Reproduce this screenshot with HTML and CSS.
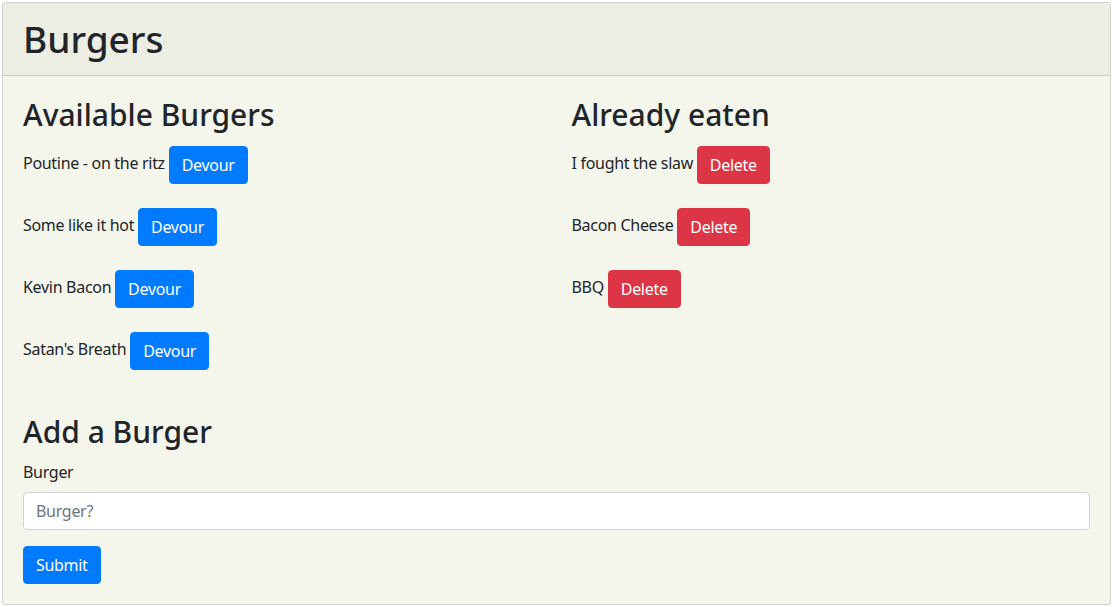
FILE: index.html
```html
<!DOCTYPE html>
<html lang="en">
<head>
<meta charset="utf-8">
<title>Burgers</title>
<link rel="stylesheet" href="styles.css">
</head>
<body>
<div class="card">
  <div class="card-header">
    <h1 class="title">Burgers</h1>
  </div>
  <div class="card-body">
    <div class="columns">
      <section class="col">
        <h2 class="heading">Available Burgers</h2>
        <p class="item">Poutine - on the ritz <button class="btn btn-blue">Devour</button></p>
        <p class="item">Some like it hot <button class="btn btn-blue">Devour</button></p>
        <p class="item">Kevin Bacon <button class="btn btn-blue">Devour</button></p>
        <p class="item">Satan's Breath <button class="btn btn-blue">Devour</button></p>
      </section>
      <section class="col">
        <h2 class="heading">Already eaten</h2>
        <p class="item">I fought the slaw <button class="btn btn-red">Delete</button></p>
        <p class="item">Bacon Cheese <button class="btn btn-red">Delete</button></p>
        <p class="item">BBQ <button class="btn btn-red">Delete</button></p>
      </section>
    </div>
    <form class="add-form">
      <h2 class="heading">Add a Burger</h2>
      <div class="form-group">
        <label class="label" for="burger">Burger</label>
        <input class="input" id="burger" type="text" placeholder="Burger?">
      </div>
      <button class="btn btn-blue" type="button">Submit</button>
    </form>
  </div>
</div>
</body>
</html>
```

FILE: styles.css
```css
* { box-sizing: border-box; }
html, body { margin: 0; }
body {
  padding: 2px 1px 2px 2px;
  font-family: "Noto Sans", "Open Sans", sans-serif;
  font-size: 16px;
  line-height: 24px;
  letter-spacing: -0.3px;
  color: #212529;
  background: #fff;
}
.card {
  border: 1px solid rgba(0,0,0,.15);
  border-radius: 4px;
  background: #f4f5eb;
  overflow: hidden;
}
.card-header {
  padding: 12px 20px;
  background: #ecede3;
  border-bottom: 1px solid rgba(0,0,0,.15);
}
.title {
  margin: 0;
  font-size: 37px;
  font-weight: 500;
  line-height: 48px;
  letter-spacing: 0;
}
.card-body { padding: 20px; }
.columns {
  display: grid;
  grid-template-columns: 1fr 1fr;
  column-gap: 30px;
}
.heading {
  margin: 0 0 8px;
  font-size: 30px;
  font-weight: 500;
  line-height: 38.4px;
  letter-spacing: 0;
}
.item { margin: 0 0 16px; }
.btn {
  display: inline-block;
  margin: 4px 0 4px 0;
  padding: 6px 12px;
  font-family: inherit;
  font-size: 16px;
  line-height: 24px;
  letter-spacing: -0.3px;
  color: #fff;
  border: 1px solid transparent;
  border-radius: 4px;
  cursor: pointer;
  vertical-align: -2px;
}
.btn-blue { background: #007bff; border-color: #007bff; }
.btn-red { background: #dc3545; border-color: #dc3545; }
.add-form { margin-top: 23px; }
.form-group { margin-bottom: 16px; }
.label { display: block; margin-bottom: 8px; }
.input {
  display: block;
  width: 100%;
  height: 38px;
  padding: 6px 12px;
  font-family: inherit;
  font-size: 16px;
  letter-spacing: -0.3px;
  color: #495057;
  background: #fff;
  border: 1px solid #ced4da;
  border-radius: 4px;
}
.input::placeholder { color: #6c757d; }
.add-form .btn { margin: 0; vertical-align: baseline; }
```
